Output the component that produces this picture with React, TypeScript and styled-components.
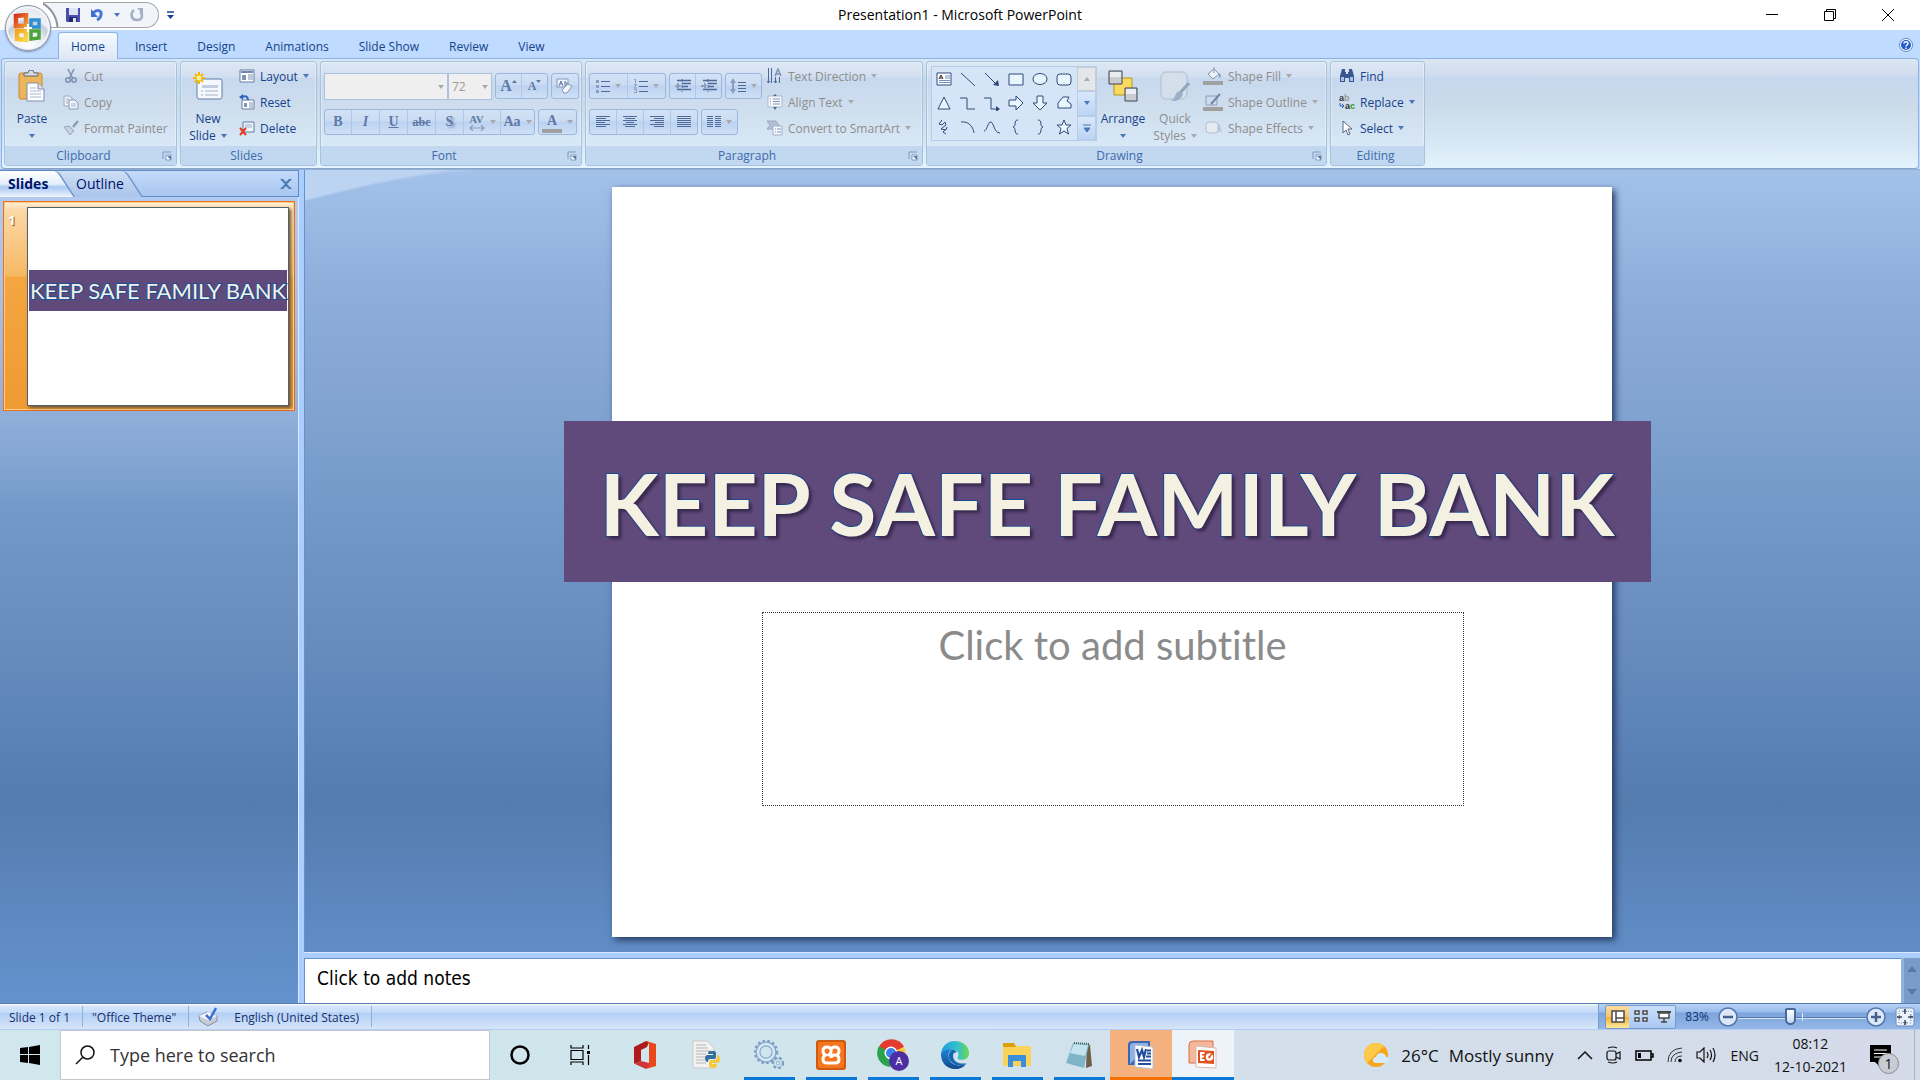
import React from 'react';
import styled, { createGlobalStyle, css } from 'styled-components';

const UI = '"Open Sans", "Noto Sans", sans-serif';
const SERIF = '"Liberation Serif", serif';
const SLIDE = 'Lato, "Open Sans", sans-serif';
const INK = '#15428b';
const MUTED = '#8d8d8d';

const GlobalStyle = createGlobalStyle`
  *, *::before, *::after { box-sizing: border-box; }
  body { margin: 0; font-family: ${UI}; font-size: 12px; color: ${INK}; }
  button, input, select, textarea { font: inherit; color: inherit; }
  button { border: 0; background: none; padding: 0; }
  h1, h2, p { margin: 0; font-weight: normal; }
  svg { display: block; flex: none; }
`;

/* ---------- window frame ---------- */

const Window = styled.div`
  display: flex;
  flex-direction: column;
  min-height: 100vh;
  background: #bfdbff;
  position: relative;
`;

const TitleBar = styled.header`
  display: grid;
  grid-template-columns: 1fr auto 1fr;
  align-items: center;
  height: 30px;
  background: #fff;
`;

const QuickAccess = styled.div`
  display: flex;
  align-items: center;
  gap: 8px;
  padding-left: 43px;
`;

const QuickTray = styled.div`
  display: flex;
  align-items: center;
  gap: 10px;
  height: 26px;
  padding: 0 14px 0 23px;
  border: 1px solid #a3a6ab;
  border-left: 0;
  border-radius: 0 13px 13px 0;
  background: radial-gradient(circle at -15px 26px, #fff 0 28px, #8f9298 29px 30px, #f1f4f9 31px);
`;

const WindowTitle = styled.h1`
  font-size: 14px;
  line-height: 20px;
  color: #000;
`;

const WindowButtons = styled.div`
  display: flex;
  justify-content: flex-end;
  padding-right: 3px;
`;

const WindowButton = styled.button`
  display: grid;
  place-items: center;
  width: 58px;
  height: 28px;
`;

const OfficeButton = styled.button`
  position: absolute;
  left: 5px;
  top: 5px;
  z-index: 3;
  display: grid;
  place-items: center;
  width: 46px;
  height: 46px;
  border: 1px solid #8a93a5;
  border-radius: 50%;
  background: radial-gradient(circle at 50% 90%, #fff 0, #e8edf4 35%, #c3ccda 52%, #eef1f6 60%, #dfe4ec 100%);
  box-shadow: inset 0 0 0 2px #f4f6fa, 0 1px 2px #7d8da8;
`;

/* ---------- ribbon ---------- */

const TabBar = styled.nav`
  display: flex;
  align-items: flex-end;
  gap: 4px;
  height: 29px;
  margin-bottom: -1px;
  padding: 0 7px 0 58px;
  position: relative;
  z-index: 1;
`;

const RibbonTab = styled.button<{ $active?: boolean }>`
  height: 27px;
  padding: 1px 12px 0;
  border: 1px solid transparent;
  border-bottom: 0;
  border-radius: 3px 3px 0 0;
  ${p => p.$active && css`
    border-color: #8db2e3;
    background: linear-gradient(#f6fafe, #e6effa 60%, #dfe8f4);
  `}
`;

const HelpButton = styled.button`
  margin-left: auto;
  align-self: center;
`;

const Ribbon = styled.section`
  display: flex;
  gap: 3px;
  margin: 0 1px;
  padding: 2px;
  border: 1px solid #8db2e3;
  border-bottom-color: #86a5c8;
  border-radius: 4px;
  background: linear-gradient(#dbe6f4 0, #cfdced 17px, #c6d7ee 18px, #cbdbea 46px, #d8e7f4 84px, #e3f4fe 108px);
`;

const GroupBox = styled.section<{ $width: number }>`
  display: flex;
  flex-direction: column;
  flex: 0 0 ${p => p.$width}px;
  height: 105px;
  border: 1px solid #a5c3de;
  border-radius: 3px;
  box-shadow: inset 0 0 0 1px #ffffff55;
  background: linear-gradient(#dde8f5 0, #d2dff0 15px, #c7d8ee 16px, #d0dfee 50px, #d9e8f6 84px);
  overflow: hidden;
`;

const GroupBody = styled.div`
  flex: 1;
  display: flex;
  padding: 0 4px;
`;

const GroupFoot = styled.footer`
  display: flex;
  align-items: center;
  height: 19px;
  padding-right: 4px;
  background: #c1d8f0;
  color: #3e6aaa;
  text-align: center;
  line-height: 19px;
`;

const GroupTitle = styled.span`
  flex: 1;
`;

const BigButton = styled.button<{ $off?: boolean; $width: number }>`
  display: flex;
  flex-direction: column;
  align-items: center;
  justify-content: flex-start;
  gap: 8px;
  flex: 0 0 ${p => p.$width}px;
  padding-top: 8px;
  line-height: 17px;
  color: ${p => (p.$off ? MUTED : INK)};
`;

const BigLabel = styled.span`
  display: flex;
  flex-direction: column;
  align-items: center;
`;

const LabelLine = styled.span`
  display: flex;
  align-items: center;
  justify-content: center;
  gap: 5px;
  min-height: 17px;
`;

const Stack = styled.div<{ $inset?: number }>`
  display: flex;
  flex-direction: column;
  padding: 1px 0 0 ${p => p.$inset ?? 0}px;
`;

const RowButton = styled.button<{ $off?: boolean }>`
  display: flex;
  align-items: center;
  gap: 5px;
  height: 26px;
  white-space: nowrap;
  color: ${p => (p.$off ? MUTED : INK)};
`;

const ToolRows = styled.div`
  display: flex;
  flex-direction: column;
  gap: 10px;
  margin-left: -1px;
  padding-top: 11px;
`;

const ToolRow = styled.div`
  display: flex;
  gap: 3px;
  height: 26px;
`;

const ToolSet = styled.div`
  display: flex;
  border: 1px solid #9ab8e0;
  border-radius: 3px;
  overflow: hidden;
  background: linear-gradient(#d3e2f5 0, #cadcf3 45%, #bcd2f0 50%, #cfe0f6 100%);
`;

const Tool = styled.button<{ $width: number }>`
  display: flex;
  align-items: center;
  justify-content: center;
  gap: 5px;
  width: ${p => p.$width}px;
  color: #5f78a5;
  & + & { border-left: 1px solid #afc8ea; }
`;

const SizeTool = styled(Tool)`
  gap: 0;
  svg { align-self: flex-start; margin-top: 6px; }
`;

const Glyph = styled.span<{ $size?: number; $italic?: boolean; $line?: string; $shadow?: boolean }>`
  font-family: ${SERIF};
  font-weight: bold;
  font-size: ${p => p.$size ?? 14}px;
  line-height: 18px;
  font-style: ${p => (p.$italic ? 'italic' : 'normal')};
  text-decoration: ${p => p.$line ?? 'none'};
  text-shadow: ${p => (p.$shadow ? '2px 2px 2px #7f97bd' : 'none')};
`;

const SpacingStack = styled.span`
  display: flex;
  flex-direction: column;
  align-items: center;
  line-height: 12px;
`;

const SmallGlyph = styled(Glyph)`
  line-height: 12px;
`;

const ColorGlyph = styled(Glyph)`
  width: 20px;
  line-height: 17px;
  text-align: center;
  border-bottom: 4px solid #a0a0a0;
`;

const Combo = styled.label<{ $width: number }>`
  position: relative;
  width: ${p => p.$width}px;
  height: 27px;
  & + & { margin-left: -3px; }
  svg { position: absolute; right: 4px; top: 12px; }
`;

const ComboField = styled.select`
  appearance: none;
  width: 100%;
  height: 100%;
  padding: 0 3px;
  border: 1px solid #abc1de;
  border-radius: 0;
  background: #efefef;
  color: #9a9a9a;
  opacity: 1;
`;

const Gallery = styled.div`
  display: grid;
  grid-template-columns: 1fr 19px;
  flex: 0 0 166px;
  margin-top: 4px;
  height: 75px;
  border: 1px solid #b5cdeb;
  background: #d5e5f7;
`;

const ShapeGrid = styled.div`
  display: grid;
  grid-template-columns: repeat(6, 24px);
  grid-auto-rows: 24px;
`;

const ShapeButton = styled.button`
  display: grid;
  place-items: center;
`;

const GalleryScroll = styled.div`
  display: flex;
  flex-direction: column;
`;

const ScrollStep = styled.button<{ $off?: boolean }>`
  flex: 1;
  display: grid;
  place-items: center;
  border: 1px solid ${p => (p.$off ? '#c8cdd4' : '#b5cdeb')};
  background: ${p => (p.$off ? '#e4e7ea' : 'linear-gradient(#d9e7fa, #bed4f3)')};
`;

/* ---------- workspace ---------- */

const Workspace = styled.main`
  flex: 1;
  display: grid;
  grid-template-columns: 299px 1fr;
  border-top: 1px solid #93b0d4;
  background: linear-gradient(#a3c2ea 0, #90afdb 13%, #80a2cf 30%, #7198c9 42%, #678bbc 57%, #5f86ba 64%, #547caf 76%, #6592cd 100%);
`;

const SidePane = styled.aside`
  display: flex;
  flex-direction: column;
  background: linear-gradient(#b9cff0 0, #b0c9ed 40px, transparent 340px);
`;

const PaneTabs = styled.div`
  display: flex;
  align-items: stretch;
  height: 27px;
  margin-bottom: 4px;
  border: 1px solid #5b8bc6;
  border-left: 0;
  background: linear-gradient(#c4dafa, #a8c6ef);
  position: relative;
  z-index: 0;
`;

const PaneTab = styled.button<{ $active?: boolean }>`
  position: relative;
  z-index: ${p => (p.$active ? 2 : 1)};
  width: ${p => (p.$active ? 67 : 68)}px;
  padding: 1px 0 0 ${p => (p.$active ? 8 : 9)}px;
  text-align: left;
  font-size: 14px;
  line-height: 24px;
  font-weight: ${p => (p.$active ? 'bold' : 'normal')};
  color: #00136b;
  &::before {
    content: '';
    position: absolute;
    z-index: -1;
    inset: 0 0 -1px ${p => (p.$active ? '-20px' : '-12px')};
    border: 1px solid #6d96cc;
    border-width: 0 2px 0 0;
    border-radius: 0 5px 0 0;
    background: ${p => (p.$active
      ? 'linear-gradient(#fff 0, #e4eefb 50%, #a9c8f3 62%, #f0f6fe 100%)'
      : 'linear-gradient(#cfdff5, #a9c4ea)')};
    transform: skewX(33deg);
  }
`;

const PaneClose = styled.button`
  margin-left: auto;
  padding-right: 6px;
`;

const Thumbnail = styled.button`
  display: grid;
  grid-template-columns: 23px 262px;
  align-items: start;
  width: 292px;
  height: 210px;
  margin-left: 3px;
  padding: 5px 0 0;
  border: 1px solid #ef6c1a;
  box-shadow: inset 0 0 0 1px #ffd08a;
  background: linear-gradient(#fff0d8 0, #fbd9a6 8px, #f7b863 74px, #f4a640 75px, #ef9a33 100%);
`;

const ThumbNumber = styled.span`
  padding: 4px 0 0 4px;
  text-align: left;
  font-size: 13px;
  font-weight: bold;
  color: #fff;
  text-shadow: 1px 1px 1px #6b522e;
`;

const ThumbSlide = styled.span`
  display: block;
  height: 199px;
  padding: 62px 1px 0;
  border: 1px solid #55606f;
  background: #fff;
  box-shadow: 2px 2px 3px #6b5a3c;
`;

const ThumbBanner = styled.span`
  display: flex;
  justify-content: center;
  height: 41px;
  background: #604a7b;
  color: #f4f0e2;
  font-family: ${SLIDE};
  font-size: 22px;
  line-height: 42px;
  white-space: nowrap;
  -webkit-text-stroke: 2px #1c4f96;
  paint-order: stroke fill;
`;

const Editor = styled.div`
  display: flex;
  flex-direction: column;
  min-width: 0;
  border-left: 5px solid #a9ceff;
  box-shadow: inset 1px 0 0 #6592cd, -1px 0 0 #d9e9ff;
`;

const Canvas = styled.div`
  position: relative;
  flex: 1;
  display: flex;
  align-items: center;
  justify-content: center;
  margin-left: 1px;
  padding-right: 2px;
  overflow: hidden;
`;

const Swoosh = styled.svg`
  position: absolute;
  left: 0;
  top: 0;
`;

const Slide = styled.article`
  position: relative;
  display: flex;
  flex-direction: column;
  gap: 30px;
  width: 1000px;
  aspect-ratio: 4 / 3;
  padding-top: 234px;
  background: #fff;
  box-shadow: 3px 3px 7px #23395f;
`;

const Banner = styled.h2`
  display: flex;
  align-items: center;
  justify-content: center;
  height: 161px;
  margin: 0 -39px 0 -48px;
  padding-top: 2px;
  background: #604a7b;
  color: #f4f0e2;
  font-family: ${SLIDE};
  font-weight: bold;
  font-size: 86px;
  white-space: nowrap;
  -webkit-text-stroke: 2px #174a8f;
  paint-order: stroke fill;
  text-shadow: 3px 3px 3px #3a2a50;
`;

const Subtitle = styled.p`
  height: 194px;
  margin: 0 148px 0 150px;
  padding-top: 8px;
  border: 1px dotted #333;
  font-family: ${SLIDE};
  font-size: 40px;
  font-variant-ligatures: none;
  line-height: 48px;
  text-align: center;
  color: #8b8b8b;
`;

const NotesPane = styled.div`
  display: flex;
  height: 50px;
  border-top: 5px solid #a9ceff;
  box-shadow: inset 0 1px 0 #6592cd, 0 -1px 0 #d9e9ff;
`;

const NotesField = styled.textarea`
  flex: 1;
  margin: 1px 0 0 1px;
  padding: 7px 12px;
  border: 0;
  resize: none;
  overflow: hidden;
  background: #fff;
  color: #000;
  font-family: "DejaVu Sans Condensed", "Noto Sans", sans-serif;
  font-size: 19px;
  line-height: 24px;
`;

const NotesScroll = styled.div`
  display: flex;
  flex-direction: column;
  align-items: center;
  justify-content: space-between;
  width: 19px;
  padding: 8px 0;
  border-left: 3px solid #92b3df;
  background: #789bc9;
`;

/* ---------- status bar ---------- */

const StatusBar = styled.footer`
  display: flex;
  justify-content: space-between;
  height: 27px;
  border-top: 1px solid #567db0;
  border-bottom: 1px solid #b4cdf5;
  background: linear-gradient(#fff 0, #d5e5fb 2px, #c9defa 8px, #b3cff5 9px, #d6e5f9 100%);
  color: #15306e;
`;

const StatusItems = styled.div`
  display: flex;
`;

const StatusItem = styled.span`
  display: flex;
  align-items: center;
  gap: 16px;
  margin: 2px 0;
  padding: 1px 12px 0 9px;
  border-right: 1px solid #8fb0dd;
`;

const StatusTools = styled.div`
  display: flex;
  align-items: center;
  gap: 9px;
  padding: 0 5px 0 6px;
  border-left: 1px solid #7e9fce;
  background: linear-gradient(#b9d2f5 0, #98bcec 8px, #7ca5dc 9px, #94b7e6 100%);
`;

const ViewSwitch = styled.div`
  display: flex;
  height: 24px;
  border: 1px solid #7598c9;
  border-radius: 2px;
  overflow: hidden;
`;

const ViewButton = styled.button<{ $active?: boolean }>`
  display: grid;
  place-items: center;
  width: 23px;
  background: ${p => (p.$active
    ? 'linear-gradient(#fbdca0, #f8c568 50%, #f5b13c 52%, #fdea9c)'
    : 'linear-gradient(#cadffa, #a9c8f1)')};
`;

const ZoomGroup = styled.div`
  display: flex;
  align-items: center;
`;

const ZoomSlider = styled.input`
  appearance: none;
  width: 128px;
  height: 22px;
  margin: 0;
  background:
    linear-gradient(#e7f0fc, #e7f0fc) 50% 50% / 1px 8px no-repeat,
    linear-gradient(#4f75ab, #4f75ab) 50% 11px / 100% 1px no-repeat,
    linear-gradient(#d3e3f8, #d3e3f8) 50% 12px / 100% 1px no-repeat;
  &::-webkit-slider-thumb {
    appearance: none;
    width: 11px;
    height: 17px;
    border: 2px solid #476a9e;
    border-radius: 2px 2px 6px 6px;
    background: linear-gradient(#fff, #c3d7f2);
  }
`;

/* ---------- taskbar ---------- */

const Taskbar = styled.footer`
  display: flex;
  height: 50px;
  background: linear-gradient(90deg, #cfe7ed 0, #d0e5ec 40%, #d3e0ec 65%, #d5dae9 100%);
  color: #111;
`;

const StartButton = styled.button`
  display: grid;
  place-items: center;
  width: 60px;
`;

const SearchBox = styled.label`
  display: flex;
  align-items: center;
  gap: 15px;
  width: 430px;
  padding: 0 14px;
  border: 1px solid #c4c8ca;
  background: #fff;
`;

const SearchField = styled.input`
  flex: 1;
  min-width: 0;
  padding: 0;
  border: 0;
  background: none;
  font-size: 18px;
  &::placeholder { color: #333; opacity: 1; }
`;

const SystemButtons = styled.div`
  display: flex;
  margin-right: 4px;
`;

const Apps = styled.div`
  display: flex;
`;

const AppButton = styled.button<{ $bg?: string; $bar?: string; $full?: boolean; $narrow?: boolean }>`
  display: grid;
  place-items: center;
  width: ${p => (p.$narrow ? 60 : 62)}px;
  background:
    linear-gradient(${p => p.$bar ?? 'transparent'}, ${p => p.$bar ?? 'transparent'}) 50% 100% / ${p => (p.$full ? '100%' : '51px')} 3px no-repeat,
    ${p => p.$bg ?? 'transparent'};
`;

const Tray = styled.div`
  display: flex;
  align-items: center;
  gap: 13px;
  margin-left: auto;
  padding-right: 15px;
  border-right: 1px solid #aab4c0;
  margin-right: 5px;
`;

const Weather = styled.button`
  display: flex;
  align-items: center;
  gap: 12px;
  padding-right: 11px;
  font-size: 17px;
  color: #111;
`;

const WeatherText = styled.span`
  display: flex;
  gap: 10px;
`;

const TrayText = styled.span`
  font-size: 14px;
`;

const Clock = styled.time`
  display: flex;
  flex-direction: column;
  align-items: center;
  margin: 0 10px 0 2px;
  font-size: 14px;
  line-height: 23px;
`;

const NoticeButton = styled.button`
  position: relative;
  display: block;
  padding: 8px 8px 8px 0;
`;

const NoticeBadge = styled.span`
  position: absolute;
  right: 0;
  bottom: 0;
  width: 21px;
  height: 21px;
  border: 1px solid #8a8d92;
  border-radius: 50%;
  background: #c9ccd4;
  color: #111;
  font-size: 14px;
  line-height: 19px;
  text-align: center;
`;

/* ---------- drawings ---------- */

const Icon = ({ w = 16, h = 16, box, children }: { w?: number; h?: number; box?: string; children: React.ReactNode }) => (
  <svg width={w} height={h} viewBox={box ?? `0 0 ${w} ${h}`} fill="none" aria-hidden="true">{children}</svg>
);

const Caret = ({ off, up }: { off?: boolean; up?: boolean }) => (
  <Icon w={6} h={4}><path d={up ? 'M0 4h6L3 0z' : 'M0 0h6L3 4z'} fill={off ? '#a7a9ae' : '#4a76b8'} /></Icon>
);

const Launcher = () => (
  <Icon w={10} h={10}>
    <path d="M1 8V1h8" stroke="#7c9bc0" />
    <path d="M4 4h5v5H4z" fill="#fff" stroke="#7c9bc0" />
    <path d="M5 5l4 4V5z" fill="#5b7ca8" />
  </Icon>
);

const OfficeLogo = () => (
  <Icon w={30} h={30}>
    <defs>
      <linearGradient id="olR" x1="0" y1="0" x2="1" y2="1"><stop stopColor="#d6341c" /><stop offset="1" stopColor="#f49b33" /></linearGradient>
      <linearGradient id="olY" x1="0" y1="0" x2="1" y2="1"><stop stopColor="#f3a51d" /><stop offset="1" stopColor="#fbd84b" /></linearGradient>
    </defs>
    <path d="M3 3l10-1v11H3z" stroke="url(#olR)" strokeWidth="4.500" />
    <path d="M18 7h8v7h-8z" stroke="#2f8fd0" strokeWidth="3.500" />
    <path d="M4 18h9v9l-9-1z" stroke="url(#olY)" strokeWidth="4.500" />
    <path d="M18 18h8v7l-8 1z" stroke="#4da23a" strokeWidth="3.500" />
    <path d="M11 15h8M15 11v8" stroke="#fff" strokeWidth="2" />
  </Icon>
);

const SaveIcon = () => (
  <Icon w={14} h={14}>
    <path d="M0 0h14v14H1L0 13z" fill="#4a4fb4" />
    <path d="M3 0h9v7H3z" fill="#dfe4f5" />
    <path d="M3 9h8v5H3z" fill="#222b66" /><path d="M7 10h3v4H7z" fill="#dfe4f5" />
  </Icon>
);

const UndoIcon = () => (
  <Icon w={14} h={14}>
    <path d="M3 5c4-4 9-3 8 2-.5 3-2 4-4 5" stroke="#4a78d4" strokeWidth="3" />
    <path d="M1 1v8h7z" fill="#3f6fd0" />
  </Icon>
);

const RedoIcon = () => (
  <Icon w={14} h={14}>
    <path d="M4 2C0 5 1 12 7 12s6-6 3-8" stroke="#a3afc5" strokeWidth="2.600" />
    <path d="M7 0h6v6z" fill="#a3afc5" />
  </Icon>
);

const PasteIcon = () => (
  <Icon w={28} h={32}>
    <rect x="1" y="3" width="23" height="26" rx="2" fill="#ebb55c" stroke="#c58b31" />
    <path d="M6 6h14V3h-4a3 3 0 0 0-6 0H6z" fill="#d9dde3" stroke="#5f6772" />
    <path d="M9 13h11l6 6v12H9z" fill="#fdfdff" stroke="#7c8fae" />
    <path d="M20 13v6h6" stroke="#7c8fae" fill="#d7e1f1" />
    <path d="M12 18h6M12 21h11M12 24h11M12 27h11" stroke="#aab8cf" />
  </Icon>
);

const CutIcon = () => (
  <Icon>
    <path d="M5 1l5 10M11 1L6 11" stroke="#7f92b0" strokeWidth="1.600" />
    <circle cx="5" cy="12" r="2.200" stroke="#7f92b0" strokeWidth="1.600" /><circle cx="11" cy="12" r="2.200" stroke="#7f92b0" strokeWidth="1.600" />
  </Icon>
);

const CopyIcon = () => (
  <Icon>
    <path d="M1 2h6l2 2v8H1z" fill="#eef2f8" stroke="#96a8c4" /><path d="M6 6h6l3 3v6H6z" fill="#f4f6fb" stroke="#8497b8" />
    <path d="M3 5h3M3 7h3M3 9h3M8 10h5M8 12h5" stroke="#a4b3cb" />
  </Icon>
);

const PainterIcon = () => (
  <Icon>
    <path d="M15 1l-5 6" stroke="#8b9cb9" strokeWidth="2.400" /><path d="M5 5l6 6-4 1z" fill="#8b9cb9" />
    <path d="M1 7l5-1 5 5-4 4z" fill="#c6d0e1" stroke="#95a5c0" />
  </Icon>
);

const NewSlideIcon = () => (
  <Icon w={32} h={32}>
    <rect x="5" y="9" width="25" height="20" rx="2" fill="#f5f8fd" stroke="#5f7fa9" />
    <path d="M10 15h16v3H10z" fill="#c2cde0" /><path d="M9 21h2M13 21h13M9 25h2M13 25h13" stroke="#a5b2ca" />
    <path d="M7 2v12M1 8h12M3 4l8 8M11 4l-8 8" stroke="#f6b300" strokeWidth="2" /><circle cx="7" cy="8" r="2.500" fill="#fff59a" />
  </Icon>
);

const LayoutIcon = () => (
  <Icon>
    <path d="M1 2h14v12H1z" fill="#fff" stroke="#627ca3" /><path d="M2 3h12v2H2z" fill="#7289ad" />
    <path d="M3 7h4v5H3z" fill="#7d93b5" /><path d="M9 7h5M9 9h5M9 11h5" stroke="#7d93b5" />
  </Icon>
);

const ResetIcon = () => (
  <Icon>
    <path d="M3 6h12v9H3z" fill="#fff" stroke="#627ca3" /><path d="M5 9h3v4H5z" fill="#7d93b5" /><path d="M10 9h4M10 11h4M10 13h4" stroke="#7d93b5" />
    <path d="M3 3c4-2 6 0 6 3" stroke="#2f62b8" strokeWidth="2" /><path d="M0 3l4-3v6z" fill="#2f62b8" />
  </Icon>
);

const DeleteIcon = () => (
  <Icon>
    <path d="M4 2h11v10H4z" fill="#eef3fb" stroke="#627ca3" /><path d="M6 5h7M6 7h7" stroke="#a0b1cd" />
    <path d="M1 8l6 7M7 8l-6 7" stroke="#e23a1e" strokeWidth="2" />
  </Icon>
);

const lines = (rows: number[][]) => (
  <Icon w={16} h={12}>{rows.map(([x1, x2], i) => <path key={i} d={`M${x1} ${i * 2 + 0.5}H${x2}`} stroke="#4f6a99" strokeWidth="1" />)}</Icon>
);
const AlignLeft = () => lines([[1, 15], [1, 11], [1, 15], [1, 10], [1, 15], [1, 11]]);
const AlignCenter = () => lines([[1, 15], [3, 13], [1, 15], [4, 12], [1, 15], [3, 13]]);
const AlignRight = () => lines([[1, 15], [5, 15], [1, 15], [6, 15], [1, 15], [5, 15]]);
const Justify = () => lines([[1, 15], [1, 15], [1, 15], [1, 15], [1, 15], [1, 15]]);

const Bullets = () => (
  <Icon w={14} h={14}><path d="M5 2.500h9M5 7.500h9M5 12.500h9" stroke="#4f6a99" /><path d="M0 1h3v3H0zM0 6h3v3H0zM0 11h3v3H0z" fill="#8a9dbf" /></Icon>
);
const Numbering = () => (
  <Icon w={14} h={14}><path d="M5 2.500h9M5 7.500h9M5 12.500h9" stroke="#4f6a99" /><path d="M0 .5h1.500V4M0 5.500h2.500L0 9h3M0 10.500h2.500v3H0" stroke="#8a9dbf" /></Icon>
);
const Indent = ({ right }: { right?: boolean }) => (
  <Icon w={16} h={14}>
    <path d="M2 1.500h14M7 4.500h9M7 7.500h6M2 10.500h14" stroke="#4f6a99" strokeWidth="1.600" />
    <path d="M7 0v14" stroke="#4f6a99" strokeDasharray="1 1" />
    <path d={right ? 'M0 6h3V3l3 4-3 4V8H0z' : 'M6 6H4V3L0 7l4 4V8h2z'} fill="#8a9dbf" />
  </Icon>
);
const LineSpacing = () => (
  <Icon w={16} h={16}><path d="M8 4.500h8M8 7.500h8M8 10.500h8M8 13.500h8" stroke="#4f6a99" /><path d="M0 5l3-5 3 5H4v6h2l-3 5-3-5h2V5z" fill="#8a9dbf" /></Icon>
);
const Columns = () => (
  <Icon w={14} h={12}><path d="M0 .5h6M0 2.500h6M0 4.500h6M0 6.500h6M0 8.500h6M0 10.500h6M8 .5h6M8 2.500h6M8 4.500h6M8 6.500h6M8 8.500h6M8 10.500h6" stroke="#4f6a99" /></Icon>
);
const EraserIcon = () => (
  <Icon w={18} h={18}>
    <path d="M1 2h11v8H1z" fill="#eef3fa" stroke="#8296b8" /><path d="M3 9l2-5 2 5M4 7h2M9 9V4M9 6h2v3H9" stroke="#5f78a5" />
    <path d="M6 13l6-6 4 2-5 7H8z" fill="#f2f5fa" stroke="#8296b8" />
  </Icon>
);
const Spacing = () => (
  <Icon w={16} h={6}><path d="M1 3h14M4 0L1 3l3 3M12 0l3 3-3 3" stroke="#8a9dbf" strokeWidth="1.200" /></Icon>
);
const SizeMark = ({ down }: { down?: boolean }) => (
  <Icon w={5} h={3}><path d={down ? 'M0 0h5L2.500 3z' : 'M0 3h5L2.500 0z'} fill="#5f78a5" /></Icon>
);

const TextDirIcon = () => (
  <Icon><path d="M1.500 0v15M4.500 0v15M8.500 9v6M12.500 9v6" stroke="#4f6a99" /><path d="M0 13l1.500 2L3 13M7 13l1.500 2 1.500-2" stroke="#4f6a99" /><path d="M8 8l3-7 3 7M9 6h4" stroke="#7d92b5" strokeWidth="1.500" /></Icon>
);
const AlignTextIcon = () => (
  <Icon><path d="M1 2h14v11H1z" fill="#f5f8fc" stroke="#a9b8cf" /><path d="M3 5h1M6 5h7M3 7.500h1M6 7.500h7M3 10h1M6 10h7" stroke="#8497b8" /><path d="M6 2l2-2 2 2zM6 13l2 3 2-3z" fill="#4f6a99" /></Icon>
);
const SmartArtIcon = () => (
  <Icon><path d="M0 1h9l3 4-3 4H0l3-4z" fill="#b3bfd2" stroke="#9aaac4" /><path d="M6 6h9v9H6z" fill="#f5f8fc" stroke="#a0b0c8" /><path d="M8 9h1M10 9h4M8 12h1M10 12h4" stroke="#8497b8" /></Icon>
);

const ArrangeIcon = () => (
  <Icon w={30} h={32}>
    <path d="M6 8h18v17H6z" fill="#f9d95f" stroke="#b99620" />
    <path d="M1 1h13v13H1z" fill="#c9ccd1" stroke="#3f444c" /><path d="M2 2h11v5H2z" fill="#ecedf0" />
    <path d="M17 18h12v13H17z" fill="#c9ccd1" stroke="#3f444c" /><path d="M18 19h10v5H18z" fill="#ecedf0" />
  </Icon>
);
const QuickStylesIcon = () => (
  <Icon w={30} h={32}>
    <rect x="1" y="2" width="26" height="27" rx="5" fill="#d5deeb" stroke="#aebdd2" />
    <path d="M29 13L19 24" stroke="#93a3bd" strokeWidth="3" /><path d="M20 21l3 3c-2 7-8 7-12 7 5-2 3-9 9-10z" fill="#9daec8" />
  </Icon>
);
const FillIcon = () => (
  <Icon w={20} h={18}><path d="M5 7l6-5 5 5-6 5z" fill="#eef2f8" stroke="#8295b5" /><path d="M11 0v6" stroke="#8295b5" /><path d="M16 6c2 1 2 4 1 5-2-1-1-3-1-5z" fill="#8295b5" /><path d="M0 14h20v4H0z" fill="#a0a0a0" /></Icon>
);
const OutlineIcon = () => (
  <Icon w={20} h={18}><path d="M3 3h11v9H3z" stroke="#8a9cba" /><path d="M17 1L8 11" stroke="#7085a8" strokeWidth="2" /><path d="M0 14h20v4H0z" fill="#a0a0a0" /></Icon>
);
const EffectsIcon = () => (
  <Icon w={20} h={18}><path d="M5 5h12l2 8H7z" fill="#c1cad9" /><rect x="3" y="3" width="12" height="11" rx="3" fill="#e5ebf3" stroke="#b0bdd1" /></Icon>
);
const FindIcon = () => (
  <Icon>
    <path d="M3 1h3v3h1v2h2V4h1V1h3l2 7v6h-5v-4H6v4H1V8z" fill="#38568f" /><path d="M2 9h3v4H2zM11 9h3v4h-3z" fill="#a8c0e8" />
  </Icon>
);
const ReplaceIcon = () => (
  <Icon>
    <g fontFamily="Liberation Sans, sans-serif" fontWeight="bold" fontSize="9">
      <text x="0" y="7" fill="#333">a</text><text x="5" y="7" fill="#9a9a9a">b</text>
      <text x="6" y="15" fill="#333">a</text><text x="11" y="15" fill="#2b9a2b">c</text>
    </g>
    <path d="M1 9v3h4M3 10l2 2-2 2" stroke="#2f5fae" />
  </Icon>
);
const SelectIcon = () => (
  <Icon><path d="M4 1v12l3-3 2 5 2-1-2-5h4z" fill="#fff" stroke="#56688a" /></Icon>
);

const shapes: [string, React.ReactNode][] = [
  ['Text Box', <><path d="M1 2h14v12H1z" fill="#fff" stroke="#2f4a78" /><path d="M3 8l2-4 2 4M4 7h2" stroke="#222" /><path d="M9 5h5M9 7h5M3 9.500h11M3 11.500h11" stroke="#6d8fc4" /></>],
  ['Line', <path d="M1 2l14 13" />],
  ['Arrow', <><path d="M1 2l12 12" /><path d="M15 15l-1-6-5 5z" fill="#2f4a78" stroke="none" /></>],
  ['Rectangle', <path d="M1 3h14v11H1z" fill="#eaf6fd" />],
  ['Oval', <ellipse cx="8" cy="8" rx="7" ry="5.500" fill="#eaf6fd" />],
  ['Rounded Rectangle', <rect x="1" y="3" width="14" height="11" rx="3" fill="#eaf6fd" />],
  ['Triangle', <path d="M8 2l6 12H2z" fill="#eaf6fd" />],
  ['Elbow Connector', <path d="M0 3h7v11h8" />],
  ['Elbow Arrow Connector', <><path d="M0 3h7v11h5" /><path d="M16 14l-4-3v6z" fill="#2f4a78" stroke="none" /></>],
  ['Right Arrow', <path d="M1 5h7V1l7 7-7 7v-4H1z" fill="#eaf6fd" />],
  ['Down Arrow', <path d="M5 1h6v7h4l-7 7-7-7h4z" fill="#eaf6fd" />],
  ['Freeform', <path d="M2 13V8l5-6h6l-2 4 4 3v4z" fill="#eaf6fd" />],
  ['Scribble', <path d="M6 1L3 5l3 1 3-3 1 3-5 4 5 1 1-3M9 11l-2 2 3 2" />],
  ['Arc', <path d="M1 3c7-1 12 4 13 11" />],
  ['Curve', <path d="M0 12C3 12 4 2 7 3s3 11 9 11" />],
  ['Left Brace', <path d="M10 1c-5 0-1 6-5 7 4 1 0 7 5 7" />],
  ['Right Brace', <path d="M6 1c5 0 1 6 5 7-4 1 0 7-5 7" />],
  ['Star', <path d="M8 1l2 5h5l-4 3.500 1.500 5.500L8 12l-4.500 3L5 9.500 1 6h5z" fill="#eaf6fd" />],
];

const EdgeLogo = () => (
  <Icon w={30} h={30} box="0 0 32 32">
    <defs>
      <linearGradient id="eg1" x1="0" y1="0" x2="1" y2="0"><stop stopColor="#1b9de2" /><stop offset=".6" stopColor="#35c1c9" /><stop offset="1" stopColor="#6cdb4d" /></linearGradient>
      <linearGradient id="eg2" x1="0" y1="0" x2="0" y2="1"><stop stopColor="#1b83d6" /><stop offset="1" stopColor="#114a8b" /></linearGradient>
    </defs>
    <path d="M1 15C2 6 8 1 16 1c9 0 15 6 15 13 0 5-4 7-8 7-3 0-5-1-4-3 2-5-1-8-6-8-6 0-10 2-12 5z" fill="url(#eg1)" />
    <path d="M1 15c2-4 7-6 12-5-4 2-5 6-3 11 3 6 10 8 18 4-3 5-8 6-12 6C7 31 1 24 1 15z" fill="url(#eg2)" />
    <path d="M13 10c-4 3-5 8-2 12 4 6 11 6 17 3-8 1-14-2-14-8 0-3 1-4 4-4-1-2-3-3-5-3z" fill="#1167b1" />
  </Icon>
);

const gear = (cx: number, cy: number, r: number, w: number) => (
  <>
    <circle cx={cx} cy={cy} r={r} stroke="#86a9cb" strokeWidth={w} />
    <circle cx={cx} cy={cy} r={r + w / 2 + 0.5} stroke="#7f9fc0" strokeWidth="2.500" strokeDasharray="2.600 2.200" />
    <circle cx={cx} cy={cy} r={r} stroke="#d6e8f6" strokeWidth={w / 2} />
  </>
);

const BLUE = '#0a78d6';
const apps: { name: string; bar?: string; bg?: string; full?: boolean; icon: React.ReactNode }[] = [
  { name: 'Office', icon: <Icon w={24} h={30}><path d="M1 7L13 1l3 1-2 5-6 3v11l-6 3-1-1z" fill="#b01a1a" /><path d="M13 1l10 3v22l-10 3 3-4V4z" fill="#e8481a" /><path d="M2 24l6-3 8 2v3l-3 3z" fill="#d0343c" /></Icon> },
  { name: 'Python file', icon: <Icon w={30} h={30}><path d="M1 1h14l7 7v20H1z" fill="#f2f2f2" stroke="#c9c9c9" /><path d="M4 5h10M4 8h12M4 11h15M4 14h10M4 17h9M4 20h9M4 23h10" stroke="#b5b5b5" /><path d="M18 11h4q2 0 2 2v4q0 2-2 2h-4q-2 0-2 3h-1q-2-1-2-4t3-3h5v-1h-5v-1q0-2 2-2z" fill="#336f9f" /><path d="M25 15q3 0 3 4t-3 4h-5v1h5v1q0 3-4 3t-4-3v-3q0-2 2-2h3q3 0 3-3z" fill="#f7c93a" /></Icon> },
  { name: 'Services', bar: BLUE, icon: <Icon w={30} h={30}>{gear(12, 12, 8, 5)}{gear(24, 23, 3, 3)}</Icon> },
  { name: 'XAMPP', bar: BLUE, icon: <Icon w={30} h={30}><rect width="30" height="30" rx="3" fill="#cf5a12" /><rect x="2" y="2" width="26" height="26" rx="2" fill="#f5761d" /><path d="M15 9.500Q14 7 11 7 7 7 7 11q0 3 2.500 4Q7 16 7 19.500 7 23 11 23h8q4 0 4-3.500 0-3.500-2.500-4.500Q23 14 23 11q0-4-4-4-3 0-4 2.500zM15 9.500V12q0 2.500-3 3M15 18q0-3 4-3" stroke="#fff" strokeWidth="3" /></Icon> },
  { name: 'Chrome', bar: BLUE, icon: <Icon w={32} h={32}><path d="M14 14L2 8a14 14 0 0 1 25 0z" fill="#e33b2e" /><path d="M14 14L2 7a14 14 0 0 0 11 21z" fill="#2ba24c" /><path d="M14 14l13-6a14 14 0 0 1-14 20z" fill="#fcc934" /><circle cx="14" cy="14" r="6.500" fill="#fff" /><circle cx="14" cy="14" r="5" fill="#3b7de9" /><circle cx="22" cy="22" r="10" fill="#4b2ea3" /><text x="22" y="26" textAnchor="middle" fontFamily="Open Sans, sans-serif" fontSize="11" fill="#fff">A</text></Icon> },
  { name: 'Edge', bar: BLUE, icon: <EdgeLogo /> },
  { name: 'File Explorer', bar: BLUE, icon: <Icon w={28} h={26}><path d="M0 2q0-1 1-1h10l2 3h14q1 0 1 1v18q0 1-1 1H0z" fill="#fbd35a" /><path d="M0 1h11l2 4H0z" fill="#dba102" /><path d="M5 14q0-1 1-1h16q1 0 1 1v11h-5v-6h-8v6H5z" fill="#3a8fdc" /></Icon> },
  { name: 'Notepad', bar: BLUE, icon: <Icon w={28} h={28}><path d="M22 3l3 1 2 21-6 2z" fill="#6e6046" /><path d="M8 2l16 1-5 24-18-5z" fill="#7fb5c6" /><path d="M9 3l14 1-3 11L5 12z" fill="#c3e4ec" /><path d="M9 2l15 1" stroke="#4d6066" strokeWidth="2" strokeDasharray="1 1" /></Icon> },
  { name: 'Word', bar: '#f77000', bg: '#f5b17d', full: true, icon: <Icon w={30} h={30}><path d="M2 5q0-4 4-4h18v24H2z" fill="#3b66b0" /><path d="M4 6q0-3 3-3h15v3L4 24z" fill="#8fb0e4" /><path d="M9 5l18 2v22L9 27z" fill="#fff" stroke="#b5bfd2" /><path d="M11 9l2 8 3-7 2 7 2-8" stroke="#234c9c" strokeWidth="2.200" /><path d="M21 10.500h4M21 13.500h4M20 16.500h5M12 20.500h13M12 24h13" stroke="#234c9c" strokeWidth="2" /></Icon> },
  { name: 'PowerPoint', bar: BLUE, bg: '#eef3f9', full: true, icon: <Icon w={30} h={30}><path d="M1 5q0-4 4-4h20v22H1z" fill="#f4b79c" stroke="#e06f45" /><path d="M8 6l20 2v20L8 27z" fill="#fff" stroke="#d9b8ab" /><path d="M10 10l16 1v13l-16-1z" fill="#e2501d" /><path d="M16.500 13H13v7h3.500M13 16.500h3" stroke="#fff" strokeWidth="2" /><circle cx="21.500" cy="17" r="2.500" stroke="#fff" strokeWidth="2.500" /><path d="M22 16l3-3" stroke="#e2501d" strokeWidth="1.500" /></Icon> },
];

const tabs = ['Home', 'Insert', 'Design', 'Animations', 'Slide Show', 'Review', 'View'];

function Group({ title, width, launcher, children }: { title: string; width: number; launcher?: boolean; children: React.ReactNode }) {
  return (
    <GroupBox $width={width} aria-label={title}>
      <GroupBody>{children}</GroupBody>
      <GroupFoot>
        <GroupTitle>{title}</GroupTitle>
        {launcher && <button aria-label={`${title} options`}><Launcher /></button>}
      </GroupFoot>
    </GroupBox>
  );
}

function Row({ icon, label, off, menu }: { icon: React.ReactNode; label: string; off?: boolean; menu?: boolean }) {
  return (
    <RowButton $off={off}>{icon}<span>{label}</span>{menu && <Caret off={off} />}</RowButton>
  );
}

function RibbonGroups() {
  return (
    <Ribbon>
      <Group title="Clipboard" width={173} launcher>
        <BigButton $width={46}>
          <PasteIcon />
          <BigLabel><LabelLine>Paste</LabelLine><LabelLine><Caret /></LabelLine></BigLabel>
        </BigButton>
        <Stack $inset={8}>
          <Row icon={<CutIcon />} label="Cut" off />
          <Row icon={<CopyIcon />} label="Copy" off />
          <Row icon={<PainterIcon />} label="Format Painter" off />
        </Stack>
      </Group>

      <Group title="Slides" width={137}>
        <BigButton $width={46}>
          <NewSlideIcon />
          <BigLabel><LabelLine>New</LabelLine><LabelLine>Slide <Caret /></LabelLine></BigLabel>
        </BigButton>
        <Stack $inset={8}>
          <Row icon={<LayoutIcon />} label="Layout" menu />
          <Row icon={<ResetIcon />} label="Reset" />
          <Row icon={<DeleteIcon />} label="Delete" />
        </Stack>
      </Group>

      <Group title="Font" width={262} launcher>
        <ToolRows>
          <ToolRow>
            <Combo $width={124}><ComboField disabled aria-label="Font"><option></option></ComboField><Caret off /></Combo>
            <Combo $width={44}><ComboField disabled aria-label="Font size"><option>72</option></ComboField><Caret off /></Combo>
            <ToolSet>
              <SizeTool $width={25} aria-label="Grow font"><Glyph $size={16}>A</Glyph><SizeMark /></SizeTool>
              <SizeTool $width={26} aria-label="Shrink font"><Glyph $size={12}>A</Glyph><SizeMark down /></SizeTool>
            </ToolSet>
            <ToolSet><Tool $width={26} aria-label="Clear formatting"><EraserIcon /></Tool></ToolSet>
          </ToolRow>
          <ToolRow>
            <ToolSet>
              <Tool $width={26}><Glyph>B</Glyph></Tool>
              <Tool $width={28}><Glyph $italic>I</Glyph></Tool>
              <Tool $width={28}><Glyph $line="underline">U</Glyph></Tool>
              <Tool $width={28}><Glyph $line="line-through" $size={12}>abc</Glyph></Tool>
              <Tool $width={28}><Glyph $shadow>S</Glyph></Tool>
              <Tool $width={37} aria-label="Character spacing"><SpacingStack><SmallGlyph $size={11}>AV</SmallGlyph><Spacing /></SpacingStack><Caret off /></Tool>
              <Tool $width={34}><Glyph>Aa</Glyph><Caret off /></Tool>
            </ToolSet>
            <ToolSet><Tool $width={37} aria-label="Font color"><ColorGlyph>A</ColorGlyph><Caret off /></Tool></ToolSet>
          </ToolRow>
        </ToolRows>
      </Group>

      <Group title="Paragraph" width={338} launcher>
        <ToolRows>
          <ToolRow>
            <ToolSet>
              <Tool $width={37} aria-label="Bullets"><Bullets /><Caret off /></Tool>
              <Tool $width={38} aria-label="Numbering"><Numbering /><Caret off /></Tool>
            </ToolSet>
            <ToolSet>
              <Tool $width={25} aria-label="Decrease list level"><Indent /></Tool>
              <Tool $width={26} aria-label="Increase list level"><Indent right /></Tool>
            </ToolSet>
            <ToolSet><Tool $width={35} aria-label="Line spacing"><LineSpacing /><Caret off /></Tool></ToolSet>
          </ToolRow>
          <ToolRow>
            <ToolSet>
              <Tool $width={26} aria-label="Align left"><AlignLeft /></Tool>
              <Tool $width={27} aria-label="Center"><AlignCenter /></Tool>
              <Tool $width={27} aria-label="Align right"><AlignRight /></Tool>
              <Tool $width={27} aria-label="Justify"><Justify /></Tool>
            </ToolSet>
            <ToolSet><Tool $width={35} aria-label="Columns"><Columns /><Caret off /></Tool></ToolSet>
          </ToolRow>
        </ToolRows>
        <Stack $inset={5}>
          <Row icon={<TextDirIcon />} label="Text Direction" off menu />
          <Row icon={<AlignTextIcon />} label="Align Text" off menu />
          <Row icon={<SmartArtIcon />} label="Convert to SmartArt" off menu />
        </Stack>
      </Group>

      <Group title="Drawing" width={401} launcher>
        <Gallery>
          <ShapeGrid>
            {shapes.map(([name, art]) => (
              <ShapeButton key={name} aria-label={name}><Icon><g stroke="#2f4a78">{art}</g></Icon></ShapeButton>
            ))}
          </ShapeGrid>
          <GalleryScroll>
            <ScrollStep $off aria-label="Scroll up"><Caret off up /></ScrollStep>
            <ScrollStep aria-label="Scroll down"><Caret /></ScrollStep>
            <ScrollStep aria-label="More shapes"><Icon w={8} h={8}><path d="M0 1h8M1 4h6L4 8z" stroke="#4a76b8" fill="#4a76b8" /></Icon></ScrollStep>
          </GalleryScroll>
        </Gallery>
        <BigButton $width={52}>
          <ArrangeIcon />
          <BigLabel><LabelLine>Arrange</LabelLine><LabelLine><Caret /></LabelLine></BigLabel>
        </BigButton>
        <BigButton $width={52} $off>
          <QuickStylesIcon />
          <BigLabel><LabelLine>Quick</LabelLine><LabelLine>Styles <Caret off /></LabelLine></BigLabel>
        </BigButton>
        <Stack $inset={2}>
          <Row icon={<FillIcon />} label="Shape Fill" off menu />
          <Row icon={<OutlineIcon />} label="Shape Outline" off menu />
          <Row icon={<EffectsIcon />} label="Shape Effects" off menu />
        </Stack>
      </Group>

      <Group title="Editing" width={95}>
        <Stack $inset={4}>
          <Row icon={<FindIcon />} label="Find" />
          <Row icon={<ReplaceIcon />} label="Replace" menu />
          <Row icon={<SelectIcon />} label="Select" menu />
        </Stack>
      </Group>
    </Ribbon>
  );
}

export default function App() {
  return (
    <Window>
      <GlobalStyle />
      <TitleBar>
        <QuickAccess>
          <QuickTray>
            <button aria-label="Save"><SaveIcon /></button>
            <button aria-label="Undo"><UndoIcon /></button>
            <Caret />
            <button aria-label="Redo"><RedoIcon /></button>
          </QuickTray>
          <button aria-label="Customize Quick Access Toolbar">
            <Icon w={7} h={8}><path d="M0 1h7" stroke={INK} strokeWidth="1.500" /><path d="M0 4h7L3.500 8z" fill={INK} /></Icon>
          </button>
        </QuickAccess>
        <WindowTitle>Presentation1 - Microsoft PowerPoint</WindowTitle>
        <WindowButtons>
          <WindowButton aria-label="Minimize"><Icon w={12} h={12}><path d="M0 5.500h12" stroke="#000" /></Icon></WindowButton>
          <WindowButton aria-label="Restore"><Icon w={12} h={12}><path d="M.5 2.500h9v9h-9zM2.500 2.500v-2h9v9h-2" stroke="#000" /></Icon></WindowButton>
          <WindowButton aria-label="Close"><Icon w={12} h={12}><path d="M0 0l12 12M12 0L0 12" stroke="#000" /></Icon></WindowButton>
        </WindowButtons>
      </TitleBar>
      <OfficeButton aria-label="Office Button"><OfficeLogo /></OfficeButton>

      <TabBar>
        {tabs.map((t, i) => <RibbonTab key={t} $active={i === 0}>{t}</RibbonTab>)}
        <HelpButton aria-label="Help">
          <Icon w={14} h={14}><circle cx="7" cy="7" r="6.500" fill="#fff" stroke="#5f86bd" /><circle cx="7" cy="7" r="5" fill="#1f5ad0" /><path d="M5 5.500c0-2.500 4-2.500 4 0C9 7 7 7 7 8.500M7 9.500V11" stroke="#fff" strokeWidth="1.500" /></Icon>
        </HelpButton>
      </TabBar>
      <RibbonGroups />

      <Workspace>
        <SidePane>
          <PaneTabs>
            <PaneTab $active>Slides</PaneTab>
            <PaneTab>Outline</PaneTab>
            <PaneClose aria-label="Close pane"><Icon w={13} h={12}><path d="M1 1h3l3 3 3-3h3L8 6l5 5h-3L7 8l-3 3H1l5-5z" fill="#4a7ab5" /></Icon></PaneClose>
          </PaneTabs>
          <Thumbnail>
            <ThumbNumber>1</ThumbNumber>
            <ThumbSlide><ThumbBanner>KEEP SAFE FAMILY BANK</ThumbBanner></ThumbSlide>
          </Thumbnail>
        </SidePane>

        <Editor>
          <Canvas>
            <Swoosh width="170" height="32" viewBox="0 0 170 32" aria-hidden="true">
              <path d="M0 0h168C100 6 60 16 0 31z" fill="#b0caef" /><path d="M0 0h145C90 7 50 17 0 30z" fill="#bdd3f2" />
            </Swoosh>
            <Slide>
              <Banner>KEEP SAFE FAMILY BANK</Banner>
              <Subtitle>Click to add subtitle</Subtitle>
            </Slide>
          </Canvas>
          <NotesPane>
            <NotesField aria-label="Notes" defaultValue="Click to add notes" />
            <NotesScroll>
              <Icon w={10} h={6}><path d="M0 6h10L5 0z" fill="#5878a8" /></Icon>
              <Icon w={10} h={6}><path d="M0 0h10L5 6z" fill="#5878a8" /></Icon>
            </NotesScroll>
          </NotesPane>
        </Editor>
      </Workspace>

      <StatusBar>
        <StatusItems>
          <StatusItem>Slide 1 of 1</StatusItem>
          <StatusItem>"Office Theme"</StatusItem>
          <StatusItem>
            <Icon w={20} h={20}><path d="M1 9l8-4 10 4v5l-9 5-8-5z" fill="#c5ccd8" stroke="#8690a4" /><path d="M1 9l9 4 9-4-9-4z" fill="#f4f6fa" /><path d="M8 8l4 4 6-11" stroke="#3a6fd0" strokeWidth="2.500" /></Icon>
            English (United States)
          </StatusItem>
        </StatusItems>
        <StatusTools>
          <ViewSwitch>
            <ViewButton $active aria-label="Normal view"><Icon w={14} h={13}><path d="M1 1h12v11H1zM5 1v11M5 8h8" stroke="#4a4a4a" strokeWidth="1.500" fill="#fff" /></Icon></ViewButton>
            <ViewButton aria-label="Slide sorter"><Icon w={14} h={13}><path d="M1 1h4v3H1zM9 1h4v3H9zM1 8h4v3H1zM9 8h4v3H9z" stroke="#4a4a4a" strokeWidth="1.500" fill="#fff" /></Icon></ViewButton>
            <ViewButton aria-label="Slide show"><Icon w={14} h={13}><path d="M0 1h14v2H0z" fill="#4a4a4a" /><path d="M2 3h10v5H2zM7 8v4M4 12h6" stroke="#4a4a4a" strokeWidth="1.500" fill="#fff" /></Icon></ViewButton>
          </ViewSwitch>
          <button>83%</button>
          <ZoomGroup>
            <button aria-label="Zoom out"><Icon w={20} h={20}><circle cx="10" cy="10" r="9" fill="#dce8f8" stroke="#4f75ab" strokeWidth="1.500" /><path d="M5 10h10" stroke="#47618c" strokeWidth="2.500" /></Icon></button>
            <ZoomSlider type="range" min={0} max={100} defaultValue={40} aria-label="Zoom" />
            <button aria-label="Zoom in"><Icon w={20} h={20}><circle cx="10" cy="10" r="9" fill="#dce8f8" stroke="#4f75ab" strokeWidth="1.500" /><path d="M5 10h10M10 5v10" stroke="#47618c" strokeWidth="2.500" /></Icon></button>
          </ZoomGroup>
          <button aria-label="Fit to window"><Icon w={20} h={20}><rect x="1" y="1" width="18" height="18" rx="2" fill="#e9f1fb" stroke="#6e8fbf" /><path d="M10 2v5M10 18v-5M2 10h5M18 10h-5" stroke="#3f4a5c" strokeWidth="1.500" /><path d="M8 5h4l-2-3zM8 15h4l-2 3zM5 8v4l-3-2zM15 8v4l3-2z" fill="#3f4a5c" /><path d="M4 4h12v12H4z" stroke="#7c8798" strokeDasharray="1 2" /></Icon></button>
        </StatusTools>
      </StatusBar>

      <Taskbar>
        <StartButton aria-label="Start"><Icon w={20} h={20}><path d="M0 3l8-1v7H0zM9 2l11-2v9H9zM0 10h8v8l-8-1zM9 10h11v10L9 18z" fill="#000" /></Icon></StartButton>
        <SearchBox>
          <Icon w={20} h={20}><circle cx="12.500" cy="7.500" r="6.500" stroke="#111" strokeWidth="1.500" /><path d="M8 12L1 19" stroke="#111" strokeWidth="1.500" /></Icon>
          <SearchField type="text" placeholder="Type here to search" aria-label="Search" />
        </SearchBox>
        <SystemButtons>
          <AppButton $narrow aria-label="Cortana"><Icon w={20} h={20}><circle cx="10" cy="10" r="8.500" stroke="#000" strokeWidth="2.500" /></Icon></AppButton>
          <AppButton $narrow aria-label="Task View"><Icon w={20} h={20}><path d="M1 0v3h12V0M1 20v-3h12v3M1 5.500h12v9H1zM18.500 0v4M18.500 10v10" stroke="#000" strokeWidth="1.200" /><path d="M17 6h3v3h-3z" fill="#000" /></Icon></AppButton>
        </SystemButtons>
        <Apps>
          {apps.map(a => (
            <AppButton key={a.name} aria-label={a.name} $bar={a.bar} $bg={a.bg} $full={a.full}>{a.icon}</AppButton>
          ))}
        </Apps>
        <Tray>
          <Weather>
            <Icon w={25} h={25}><circle cx="12" cy="12" r="12" fill="#f9a71a" /><path d="M0 12a12 12 0 0 1 20-9L3 20a12 12 0 0 1-3-8z" fill="#fdc94a" /><path d="M12 20q-3 0-3-3t3-3q1-4 5-4t5 4q3 0 3 3t-3 3z" fill="#d3ebfb" /></Icon>
            <WeatherText><span>26°C</span><span>Mostly sunny</span></WeatherText>
          </Weather>
          <button aria-label="Show hidden icons"><Icon w={16} h={10}><path d="M1 9l7-7 7 7" stroke="#111" strokeWidth="1.500" /></Icon></button>
          <button aria-label="Meet now"><Icon w={16} h={18}><rect x="1" y="5" width="9" height="9" rx="2" stroke="#111" strokeWidth="1.200" /><path d="M10 8l4-2v7l-4-2M2 2q5-2 9 0M2 16q5 2 9 0" stroke="#111" strokeWidth="1.200" /></Icon></button>
          <button aria-label="Battery"><Icon w={19} h={11}><path d="M1 1h15v9H1zM16 4h2v3h-2" stroke="#000" strokeWidth="1.500" /><path d="M3 3h3v5H3z" fill="#000" /></Icon></button>
          <button aria-label="Network"><Icon w={16} h={16}><path d="M1 15Q1 2 15 1M4 15Q4 6 15 5M8 15Q8 9 15 9" stroke="#333" /><circle cx="13" cy="13.500" r="1.800" fill="#000" /></Icon></button>
          <button aria-label="Volume"><Icon w={21} h={16}><path d="M1 5h3l4-4v14l-4-4H1zM11 5q2 3 0 6M14 3q3 5 0 10M17 1q4 7 0 14" stroke="#111" strokeWidth="1.200" /></Icon></button>
          <TrayText>ENG</TrayText>
          <Clock><span>08:12</span><span>12-10-2021</span></Clock>
          <NoticeButton aria-label="Notifications">
            <Icon w={21} h={21}><path d="M0 0h21v17H9v4l-4-4H0z" fill="#000" /><path d="M4 5h13M4 8.500h13M4 12h9" stroke="#fff" strokeWidth="1.200" /></Icon>
            <NoticeBadge>1</NoticeBadge>
          </NoticeButton>
        </Tray>
      </Taskbar>
    </Window>
  );
}
